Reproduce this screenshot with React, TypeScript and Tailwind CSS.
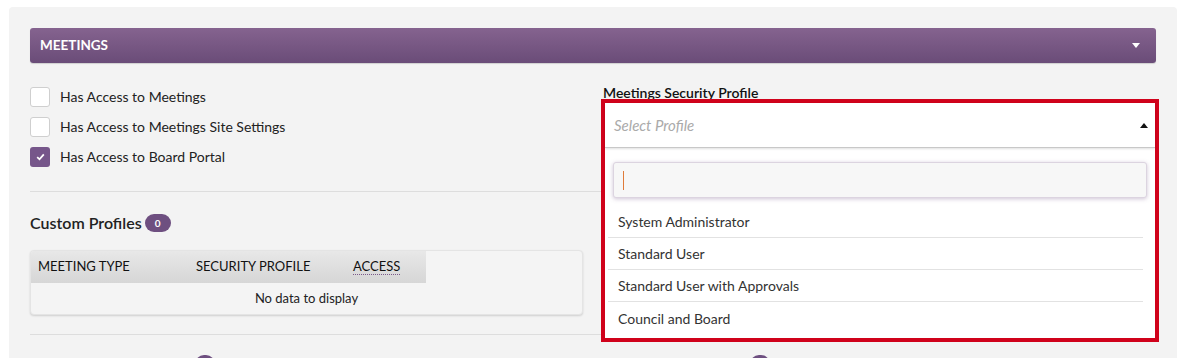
import React from 'react'

const profiles = ['System Administrator', 'Standard User', 'Standard User with Approvals', 'Council and Board']

const access = [
  { label: 'Has Access to Meetings', checked: false },
  { label: 'Has Access to Meetings Site Settings', checked: false },
  { label: 'Has Access to Board Portal', checked: true },
]

export default function App() {
  return (
    <div className="h-[358px] overflow-hidden bg-white pt-[7px] font-['Lato','Noto_Sans',sans-serif] text-[14px] text-[#222]">
      <div className="ml-[9px] w-[1168px] min-h-[400px] rounded-[4px] bg-[#f3f3f3] px-[21px] pt-[21px]">
        {/* section header */}
        <div className="flex h-[35px] items-center justify-between rounded-[3px] bg-gradient-to-b from-[#85638f] to-[#6a4c78] pl-[10px] pr-[16px] shadow-[0_1px_1px_rgba(0,0,0,0.15)]">
          <span className="text-[13.5px] font-bold text-white">MEETINGS</span>
          <svg width="8" height="5" viewBox="0 0 8 5">
            <polygon points="0,0 8,0 4,5" fill="#fff" />
          </svg>
        </div>

        <div className="mt-[24px] grid grid-cols-[553px_553px] gap-x-[20px]">
          <div className="flex flex-col gap-[10px]">
            {access.map(a => (
              <label key={a.label} className="flex h-[20px] items-center gap-[10px]">
                <Checkbox checked={a.checked} />
                <span className="leading-[16px]">{a.label}</span>
              </label>
            ))}
          </div>

          <div className="relative">
            <div className="-mt-[2px] font-semibold leading-[16px] text-[#111]">Meetings Security Profile</div>

            {/* open select, outlined in red */}
            <div className="absolute left-[-2px] top-[12px] z-10 h-[243px] w-[558px] border-4 border-[#d0021b] bg-white">
              <div className="flex h-[45px] items-center justify-between border-b border-[#c8c8c8] pl-[9px] pr-[7px] shadow-[0_1px_2px_rgba(0,0,0,0.12)]">
                <span className="text-[15px] italic text-[#aaa]">Select Profile</span>
                <svg width="8" height="5" viewBox="0 0 8 5">
                  <polygon points="0,5 8,5 4,0" fill="#111" />
                </svg>
              </div>
              <div className="mx-[8px] mt-[14px] flex h-[36px] items-center rounded-[3px] border border-[#dcd4e0] bg-[#f7f7f7] pl-[9px] shadow-[0_1px_4px_rgba(118,86,138,0.35)]">
                <span className="h-[19px] w-px bg-[#e07b39]" />
              </div>
              <div className="mt-[8px] ml-[3px] mr-[12px]">
                {profiles.map((p, i) => (
                  <div
                    key={p}
                    className={`flex h-[32px] items-center pl-[10px] text-[#333] ${i < profiles.length - 1 ? 'border-b border-[#e2e2e2]' : ''}`}
                  >
                    {p}
                  </div>
                ))}
              </div>
            </div>
          </div>
        </div>

        <hr className="mt-[24px] border-t border-[#dddddd]" />

        <div className="w-[553px]">
          <div className="mt-[21px] flex h-[20px] items-center gap-[3px]">
            <span className="text-[16px] font-semibold text-[#222]">Custom Profiles</span>
            <Badge value="0" />
          </div>

          <div className="mt-[17px] overflow-hidden rounded-[4px] border border-[#e4e4e4] bg-[#f4f4f4] shadow-[0_1px_2px_rgba(0,0,0,0.15)]">
            <div className="flex h-[32px] w-[395px] items-center bg-gradient-to-b from-[#e8e8e8] to-[#d6d6d6] text-[13px] text-[#111]">
              <div className="w-[158px] pl-[7px]">MEETING TYPE</div>
              <div className="w-[157px] pl-[7px]">SECURITY PROFILE</div>
              <div className="pl-[7px]">
                <span className="border-b border-dotted border-[#7b5a8a] leading-[15px]">ACCESS</span>
              </div>
            </div>
            <div className="flex h-[31px] items-center justify-center text-[13px] text-[#222]">No data to display</div>
          </div>
        </div>

        <hr className="mt-[19px] border-t border-[#dddddd]" />

        {/* next row, only the tops of its count badges are in view */}
        <div className="mt-[20px] grid grid-cols-[553px_553px] gap-x-[20px]">
          <div className="pl-[165px]">
            <span className="block h-[18px] w-[20px] rounded-full bg-[#6e4f80]" />
          </div>
          <div className="pl-[147px]">
            <span className="block h-[18px] w-[20px] rounded-full bg-[#6e4f80]" />
          </div>
        </div>
      </div>
    </div>
  )
}

function Checkbox({ checked }: { checked: boolean }) {
  if (checked) {
    return (
      <span className="flex h-[20px] w-[20px] items-center justify-center rounded-[3px] bg-[#76568a]">
        <svg width="9" height="8" viewBox="0 0 9 8">
          <polyline points="1.2,4.2 3.5,6.3 7.8,1.4" fill="none" stroke="#fff" strokeWidth="1.8" />
        </svg>
      </span>
    )
  }
  return <span className="h-[20px] w-[20px] rounded-[3px] border border-[#cfcfcf] bg-white" />
}

function Badge({ value }: { value: string }) {
  return (
    <span className="inline-flex h-[18px] min-w-[26px] items-center justify-center rounded-full bg-[#6e4f80] px-[8px] text-[10px] font-bold text-white">
      {value}
    </span>
  )
}
